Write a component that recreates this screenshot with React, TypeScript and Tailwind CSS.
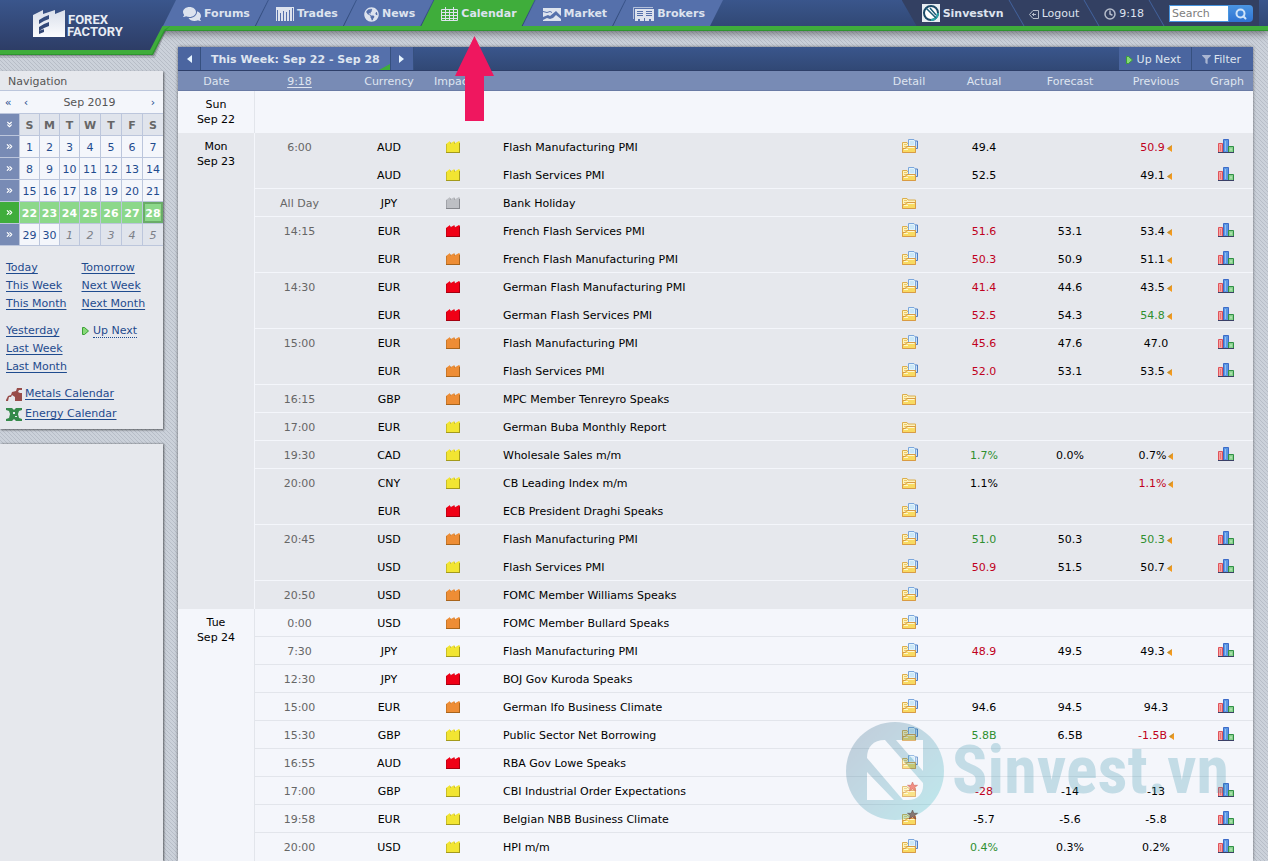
import React from 'react';
import { ChevronsDown, ChevronsRight, Clock, Search } from 'lucide-react';
import { FaComments, FaFilter, FaGlobeAmericas } from 'react-icons/fa';
import clsx from 'clsx';

type Impact = 'low' | 'medium' | 'high' | 'none';
type Detail = 'folder' | 'docs' | 'star' | 'darkstar';
type Tone = 'up' | 'down';

interface CalendarEvent {
  time?: string;
  currency: string;
  impact: Impact;
  title: string;
  detail: Detail;
  actual?: string;
  actualTone?: Tone;
  forecast?: string;
  previous?: string;
  previousTone?: Tone;
  revised?: boolean;
  graph?: boolean;
}

interface CalendarDay {
  weekday: string;
  date: string;
  shaded: boolean;
  events: CalendarEvent[];
}

const DAYS: CalendarDay[] = [
  { weekday: 'Sun', date: 'Sep 22', shaded: false, events: [] },
  {
    weekday: 'Mon',
    date: 'Sep 23',
    shaded: true,
    events: [
      { time: '6:00', currency: 'AUD', impact: 'low', title: 'Flash Manufacturing PMI', detail: 'docs', actual: '49.4', previous: '50.9', previousTone: 'down', revised: true, graph: true },
      { currency: 'AUD', impact: 'low', title: 'Flash Services PMI', detail: 'docs', actual: '52.5', previous: '49.1', revised: true, graph: true },
      { time: 'All Day', currency: 'JPY', impact: 'none', title: 'Bank Holiday', detail: 'folder' },
      { time: '14:15', currency: 'EUR', impact: 'high', title: 'French Flash Services PMI', detail: 'docs', actual: '51.6', actualTone: 'down', forecast: '53.1', previous: '53.4', revised: true, graph: true },
      { currency: 'EUR', impact: 'medium', title: 'French Flash Manufacturing PMI', detail: 'docs', actual: '50.3', actualTone: 'down', forecast: '50.9', previous: '51.1', revised: true, graph: true },
      { time: '14:30', currency: 'EUR', impact: 'high', title: 'German Flash Manufacturing PMI', detail: 'docs', actual: '41.4', actualTone: 'down', forecast: '44.6', previous: '43.5', revised: true, graph: true },
      { currency: 'EUR', impact: 'high', title: 'German Flash Services PMI', detail: 'docs', actual: '52.5', actualTone: 'down', forecast: '54.3', previous: '54.8', previousTone: 'up', revised: true, graph: true },
      { time: '15:00', currency: 'EUR', impact: 'medium', title: 'Flash Manufacturing PMI', detail: 'docs', actual: '45.6', actualTone: 'down', forecast: '47.6', previous: '47.0', graph: true },
      { currency: 'EUR', impact: 'medium', title: 'Flash Services PMI', detail: 'docs', actual: '52.0', actualTone: 'down', forecast: '53.1', previous: '53.5', revised: true, graph: true },
      { time: '16:15', currency: 'GBP', impact: 'medium', title: 'MPC Member Tenreyro Speaks', detail: 'folder' },
      { time: '17:00', currency: 'EUR', impact: 'low', title: 'German Buba Monthly Report', detail: 'folder' },
      { time: '19:30', currency: 'CAD', impact: 'low', title: 'Wholesale Sales m/m', detail: 'docs', actual: '1.7%', actualTone: 'up', forecast: '0.0%', previous: '0.7%', revised: true, graph: true },
      { time: '20:00', currency: 'CNY', impact: 'low', title: 'CB Leading Index m/m', detail: 'folder', actual: '1.1%', previous: '1.1%', previousTone: 'down', revised: true },
      { currency: 'EUR', impact: 'high', title: 'ECB President Draghi Speaks', detail: 'docs' },
      { time: '20:45', currency: 'USD', impact: 'medium', title: 'Flash Manufacturing PMI', detail: 'docs', actual: '51.0', actualTone: 'up', forecast: '50.3', previous: '50.3', previousTone: 'up', revised: true, graph: true },
      { currency: 'USD', impact: 'low', title: 'Flash Services PMI', detail: 'docs', actual: '50.9', actualTone: 'down', forecast: '51.5', previous: '50.7', revised: true, graph: true },
      { time: '20:50', currency: 'USD', impact: 'medium', title: 'FOMC Member Williams Speaks', detail: 'docs' }
    ]
  },
  {
    weekday: 'Tue',
    date: 'Sep 24',
    shaded: false,
    events: [
      { time: '0:00', currency: 'USD', impact: 'medium', title: 'FOMC Member Bullard Speaks', detail: 'docs' },
      { time: '7:30', currency: 'JPY', impact: 'low', title: 'Flash Manufacturing PMI', detail: 'docs', actual: '48.9', actualTone: 'down', forecast: '49.5', previous: '49.3', revised: true, graph: true },
      { time: '12:30', currency: 'JPY', impact: 'high', title: 'BOJ Gov Kuroda Speaks', detail: 'docs' },
      { time: '15:00', currency: 'EUR', impact: 'medium', title: 'German Ifo Business Climate', detail: 'docs', actual: '94.6', forecast: '94.5', previous: '94.3', graph: true },
      { time: '15:30', currency: 'GBP', impact: 'low', title: 'Public Sector Net Borrowing', detail: 'docs', actual: '5.8B', actualTone: 'up', forecast: '6.5B', previous: '-1.5B', previousTone: 'down', revised: true, graph: true },
      { time: '16:55', currency: 'AUD', impact: 'high', title: 'RBA Gov Lowe Speaks', detail: 'docs' },
      { time: '17:00', currency: 'GBP', impact: 'low', title: 'CBI Industrial Order Expectations', detail: 'star', actual: '-28', actualTone: 'down', forecast: '-14', previous: '-13', graph: true },
      { time: '19:58', currency: 'EUR', impact: 'low', title: 'Belgian NBB Business Climate', detail: 'darkstar', actual: '-5.7', forecast: '-5.6', previous: '-5.8', graph: true },
      { time: '20:00', currency: 'USD', impact: 'low', title: 'HPI m/m', detail: 'docs', actual: '0.4%', actualTone: 'up', forecast: '0.3%', previous: '0.2%', graph: true }
    ]
  }
];

const WEEKS = [
  [1, 2, 3, 4, 5, 6, 7],
  [8, 9, 10, 11, 12, 13, 14],
  [15, 16, 17, 18, 19, 20, 21],
  [22, 23, 24, 25, 26, 27, 28],
  [29, 30, 1, 2, 3, 4, 5]
];

const IMPACT_COLORS: Record<Impact, { fill: string; edge: string; label: string }> = {
  low: { fill: '#f2e532', edge: '#a39a1c', label: 'Low impact' },
  medium: { fill: '#ee8d35', edge: '#a8641c', label: 'Medium impact' },
  high: { fill: '#f00016', edge: '#a30010', label: 'High impact' },
  none: { fill: '#bdbfc4', edge: '#85878d', label: 'Non-economic' }
};

function ImpactIcon({ impact }: { impact: Impact }) {
  const { fill, edge, label } = IMPACT_COLORS[impact];
  return (
    <svg width="14" height="12" viewBox="0 0 14 12" role="img" aria-label={label} className="mx-auto block">
      <path d="M0 12V3l4-3v2.500L8.500 0v2.500L13 0l1 1v11z" fill={fill} />
      <path d="M0 11h13V2h1v10H0z" fill={edge} />
      <path d="M0 3h1v8H0zM4 1h1v2H4zM8 1h1v2H8z" fill={edge} opacity=".5" />
    </svg>
  );
}

function DetailIcon({ type }: { type: Detail }) {
  return (
    <svg width="16" height="15" viewBox="0 0 16 15" aria-hidden="true" className="ml-[23px] block">
      <path d="M.5 14.500V4.500h4.500l1 1.500h7.500v8.500z" fill="#fdf3bd" stroke="#dcae4c" />
      <path d="M2 6.500h3M2 8.500h2" stroke="#ecc968" />
      {type === 'docs' && (
        <>
          <path d="M9 3h6.500v7.500H9z" fill="#c9dff5" stroke="#4f7fc4" />
          <path d="M6.500 1.500h5.500l1.500 1.500v6.500h-7z" fill="#e2f3fb" stroke="#7ba6dc" />
          <path d="M8 4h4M8 6h4" stroke="#b5dcf2" />
        </>
      )}
      <path d="M.5 14.500v-4h3l1-2h9v6z" fill="#f8da62" stroke="#d99b45" />
      <path d="M5.500 9.500h7M2 11.500h4" stroke="#fff7d0" />
      {(type === 'star' || type === 'darkstar') && (
        <path
          d="M10.500 0l1.300 3.300h3.700l-2.900 2.100 1.200 3.600-3.300-2.100L7.200 9l1.200-3.600-2.900-2.100h3.700z"
          fill={type === 'star' ? '#ee6a5c' : '#a9655a'}
          stroke={type === 'star' ? '#c9483c' : '#7c4238'}
          strokeWidth=".7"
        />
      )}
    </svg>
  );
}

function GraphIcon() {
  return (
    <svg width="16" height="14" viewBox="0 0 16 14" aria-hidden="true" className="block">
      <path d="M.5 4.500h4v9h-4z" fill="#f5a3a1" stroke="#e0525a" />
      <path d="M2.500 6v6" stroke="#ee7377" />
      <path d="M5.500.5h5v13h-5z" fill="#5b97e4" stroke="#3c6bc8" />
      <path d="M7.500 2v10" stroke="#92bff2" />
      <path d="M10.500 7.500h5v6h-5z" fill="#86d08c" stroke="#2f8f45" />
      <path d="M12.500 9.500h1v2h-1z" fill="#d8f3d4" />
      <path d="M0 13.500h16" stroke="#3a3f66" />
    </svg>
  );
}

function PlayIcon() {
  return (
    <svg width="7" height="8" viewBox="0 0 7 8" aria-hidden="true" className="shrink-0">
      <path d="M.5.500h2L6.500 4l-4 3.500h-2z" fill="#86d977" stroke="#3a9f35" />
    </svg>
  );
}

function Logo() {
  return (
    <a href="#" aria-label="Forex Factory" className="relative block h-[26px] w-[176px] shrink-0">
      <svg width="180" height="62" viewBox="0 0 180 62" className="absolute left-0 top-0">
        <defs>
          <linearGradient id="logoBg" x1="0" y1="0" x2="0" y2="1">
            <stop offset="0" stopColor="#3a568c" />
            <stop offset="1" stopColor="#2d3d66" />
          </linearGradient>
          <linearGradient id="logoMark" x1="0" y1="0" x2="0" y2="1">
            <stop offset="0" stopColor="#d9dfea" />
            <stop offset="1" stopColor="#fbfcfe" />
          </linearGradient>
        </defs>
        <path d="M0 31H166L155 58H0z" fill="#000" opacity=".12" />
        <path d="M0 31H166L154 56H0z" fill="#000" opacity=".2" />
        <path d="M0 26H170L165 31 153 55H0z" fill="#2f9430" />
        <path d="M0 26H170L164 30 152 54H0z" fill="#3fad3b" />
        <path d="M0 0H176L150 50H0z" fill="url(#logoBg)" />
        <path
          d="M33 15l10-5v4l12-4v4l10-4v27H33zM39 20v4l5-3v-4zM44 17v4l5-2v-4zM39 27v4l5-2v-5zM44 24v4l5-2v-4zM39 31v3l5-2v-4z"
          fill="url(#logoMark)"
          fillRule="evenodd"
        />
        <g fill="#e8ecf4" fontFamily="Roboto, sans-serif" fontWeight="700" fontSize="13">
          <text x="68" y="24">FOREX</text>
          <text x="67" y="36">FACTORY</text>
        </g>
      </svg>
    </a>
  );
}

function TradesIcon() {
  return (
    <svg width="18" height="14" viewBox="0 0 18 14" aria-hidden="true">
      <path d="M0 0h18v14h-1V1h-1v13h-2V3h-1v11h-2V5h-1v9H8V4H7v10H5V6H4v8H2V3H1v11H0z" fill="currentColor" />
    </svg>
  );
}

function CalendarIcon() {
  return (
    <svg width="17" height="14" viewBox="0 0 17 14" aria-hidden="true">
      <path d="M.5 2.500h16v11H.5zM0 5.500h17M0 8.500h17M0 11.500h17M4.500 0v14M8.500 3v11M12.500 0v14" fill="none" stroke="currentColor" />
    </svg>
  );
}

function MarketIcon() {
  return (
    <svg width="18" height="13" viewBox="0 0 18 13" aria-hidden="true">
      <path d="M0 0h18v13H0z" fill="currentColor" />
      <path d="M0 9l5-2 2 1 6-5 5 5v3l-5-4-3 3-3 1-3-1-4 2z" fill="#5570ab" />
      <path d="M0 3.500l4 1 3-1 2 1" fill="none" stroke="#5570ab" />
    </svg>
  );
}

function BrokersIcon() {
  return (
    <svg width="21" height="14" viewBox="0 0 21 14" aria-hidden="true">
      <path d="M.5 12V.5H20" fill="none" stroke="currentColor" opacity=".7" />
      <path d="M2 2h19v12h-3v-2h-2v2h-4v-3h-1v3H7v-2H5v2H2z" fill="currentColor" />
      <path d="M4 4.500h6M4 6.500h6M4 8.500h6M13 4.500h6M13 6.500h6M13 8.500h6" stroke="#5570ab" />
    </svg>
  );
}

function HintArrow() {
  return (
    <svg width="39" height="85" viewBox="0 0 39 85" aria-hidden="true" className="pointer-events-none absolute left-[34px] top-9">
      <path d="M19.500 0L39 40H29v45H10V40H0z" fill="#ef175f" />
    </svg>
  );
}

const TABS = [
  { label: 'Forums', icon: <FaComments size={18} /> },
  { label: 'Trades', icon: <TradesIcon /> },
  { label: 'News', icon: <FaGlobeAmericas size={15} /> },
  { label: 'Calendar', icon: <CalendarIcon />, active: true },
  { label: 'Market', icon: <MarketIcon /> },
  { label: 'Brokers', icon: <BrokersIcon /> }
];

function Slash() {
  return <span className="h-full w-px skew-x-[30deg] bg-[#43639f]" />;
}

function Header() {
  return (
    <header className="relative z-20 border-b border-[#2f9430] shadow-[0_2px_8px_rgba(0,0,0,0.5)]">
      <div className="flex h-[30px] items-start justify-between border-b-4 border-[#3fad3b] bg-linear-to-b from-[#3a568c] to-[#314875]">
        <div className="flex">
          <Logo />
          <ul className="-ml-px flex font-bold text-[#dde3ee]">
            {TABS.map((tab) => (
              <li key={tab.label} className="relative -ml-3">
                <a
                  href="#"
                  className={clsx(
                    'flex h-[26px] items-center gap-[3px] pl-5 pr-[18px] pt-0.5 [clip-path:polygon(13px_0,100%_0,calc(100%-13px)_100%,0_100%)]',
                    tab.active ? 'bg-[#3fad3b]' : 'bg-[#5570ab]'
                  )}
                >
                  {tab.icon}
                  <span>{tab.label}</span>
                </a>
                {tab.active && <HintArrow />}
              </li>
            ))}
          </ul>
        </div>

        <div className="mr-[9px] flex h-[26px] items-center bg-[#334062] pl-5 pr-1.5 text-[#dde3ee] [clip-path:polygon(0_0,100%_0,100%_100%,15px_100%)]">
          <a href="#" className="flex items-center gap-[3px] pr-3 font-bold">
            <svg width="18" height="18" viewBox="0 0 18 18" aria-hidden="true">
              <path d="M0 0h18v18H0z" fill="#e8edf2" />
              <circle cx="9" cy="9" r="7" fill="#fff" stroke="#1c4a68" strokeWidth="2" />
              <path d="M9 16a7 7 0 0 0 7-7" fill="none" stroke="#2aa5a8" strokeWidth="2" />
              <path d="M4 4l10 10M8 4l6 7" stroke="#1c5d78" strokeWidth="1.500" fill="none" />
            </svg>
            <span className="pt-0.5">Sinvestvn</span>
          </a>
          <Slash />
          <a href="#" className="flex items-center gap-[3px] px-3 pt-0.5">
            <svg width="10" height="9" viewBox="0 0 10 9" aria-hidden="true" fill="none" stroke="#b5bccb">
              <path d="M4 .5h5.500v8H4l-3.500-4zM3 4.500h4M4.500 3v3" />
            </svg>
            Logout
          </a>
          <Slash />
          <a href="#" className="flex items-center gap-[3px] px-3 pt-0.5">
            <Clock size={12} strokeWidth={3} className="text-[#b5bccb]" />
            9:18
          </a>
          <Slash />
          <form className="ml-3 mt-[5px] flex h-[17px] w-[84px] self-start">
            <input
              aria-label="Search"
              placeholder="Search"
              className="min-w-0 flex-1 border border-[#4795e0] bg-white px-0.5 text-[11px] text-[#333] placeholder:text-[#7d7d7d]"
            />
            <button type="button" aria-label="Go" className="flex w-6 items-center justify-center rounded-r-sm bg-linear-to-b from-[#4b95e2] to-[#2f73d2] text-[#cfe4fa]">
              <Search size={12} strokeWidth={4} />
            </button>
          </form>
        </div>
      </div>
    </header>
  );
}

function MiniCalendar() {
  return (
    <table className="w-full table-fixed border-separate border-spacing-0 text-center">
      <colgroup>
        <col className="w-5" />
        <col className="w-5" />
        <col className="w-5" />
        <col className="w-5" />
        <col className="w-[21px]" />
        <col className="w-[21px]" />
        <col className="w-[21px]" />
        <col />
      </colgroup>
      <thead>
        <tr className="h-[22px] text-[#666]">
          <th className="border-b border-r border-[#bcc6dc] bg-[#788bb5] text-white">
            <ChevronsDown size={9} strokeWidth={3} className="mx-auto" />
          </th>
          {['S', 'M', 'T', 'W', 'T', 'F', 'S'].map((day, i) => (
            <th key={i} className="border-b border-r border-[#bcc6dc] bg-[#e0e4ec] pt-0.5 font-bold last:border-r-0">
              {day}
            </th>
          ))}
        </tr>
      </thead>
      <tbody>
        {WEEKS.map((week, w) => {
          const current = w === 3;
          return (
            <tr key={w} className="h-[22px]">
              <td className={clsx('border-b border-r border-[#bcc6dc] text-white', current ? 'bg-[#3fad3b]' : 'bg-[#788bb5]')}>
                <ChevronsRight size={9} strokeWidth={3} className="mx-auto" />
              </td>
              {week.map((day, d) => {
                const nextMonth = w === 4 && d > 1;
                const today = current && d === 6;
                return (
                  <td
                    key={d}
                    className={clsx(
                      'border-b border-r border-[#bcc6dc] pt-0.5 last:border-r-0',
                      current && 'bg-[#8cd88a] font-bold text-white',
                      today && 'shadow-[inset_0_0_0_2px_#6aac68]',
                      nextMonth && 'bg-[#e0e4ec] italic text-[#7c8088]',
                      !current && !nextMonth && 'bg-[#f4f6fb] text-[#1f4b8e]'
                    )}
                  >
                    <a href="#">{day}</a>
                  </td>
                );
              })}
            </tr>
          );
        })}
      </tbody>
    </table>
  );
}

function QuickLinks({ links }: { links: string[] }) {
  return (
    <ul className="w-19">
      {links.map((link) => (
        <li key={link} className="leading-[18px]">
          <a href="#" className="underline underline-offset-2">{link}</a>
        </li>
      ))}
    </ul>
  );
}

function Sidebar() {
  return (
    <aside className="flex w-[163px] shrink-0 flex-col gap-[15px] pt-10">
      <section className="bg-[#e6e8ed] pb-[5px] shadow-[1px_1px_2px_rgba(0,0,0,0.55)]">
        <h2 className="flex h-5 items-center border-b border-[#bcc6dc] px-2 pt-0.5 text-[#555]">Navigation</h2>
        <div className="flex h-[23px] items-center border-b border-[#bcc6dc] bg-[#f4f6fb] pt-0.5 text-[#1f4b8e]">
          <a href="#" className="w-4 text-center">«</a>
          <a href="#" className="w-5 text-center">‹</a>
          <span className="flex-1 text-center text-[#555]">Sep 2019</span>
          <a href="#" className="w-5 text-center">›</a>
        </div>
        <MiniCalendar />
        <div className="px-1.5 pt-[13px] text-[#1f4b8e]">
          <div className="flex">
            <QuickLinks links={['Today', 'This Week', 'This Month']} />
            <QuickLinks links={['Tomorrow', 'Next Week', 'Next Month']} />
          </div>
          <div className="mt-[9px] flex items-start">
            <QuickLinks links={['Yesterday', 'Last Week', 'Last Month']} />
            <a href="#" className="flex h-[18px] items-center gap-1">
              <PlayIcon />
              <span className="border-b border-dotted border-[#1f4b8e] leading-[13px]">Up Next</span>
            </a>
          </div>
          <ul className="mt-2">
            <li className="flex h-5 items-center gap-[3px]">
              <svg width="16" height="13" viewBox="0 0 16 13" aria-hidden="true">
                <path d="M0 12l2-4 3-1 1-3 4-1 1-3h5v2h-3l-1 2 2 1h2v8H9V9L6 7 5 9 3 9l-1 4H0z" fill="#984c49" />
              </svg>
              <a href="#" className="underline underline-offset-2">Metals Calendar</a>
            </li>
            <li className="flex h-5 items-center gap-[3px]">
              <svg width="16" height="13" viewBox="0 0 16 13" aria-hidden="true">
                <path d="M0 0h6l2 2 2-2h6v2l-3 1-1 3 1 4 3 1v2h-6l-2-2-2 2H0v-2l3-1 1-4-1-3-3-1z" fill="#358a4b" />
                <path d="M7 4h2v2H7zM9 8h2v1H9z" fill="#e6e8ed" />
              </svg>
              <a href="#" className="underline underline-offset-2">Energy Calendar</a>
            </li>
          </ul>
        </div>
      </section>
      <section className="flex-1 bg-[#e6e8ed] shadow-[1px_0_2px_rgba(0,0,0,0.55)]" />
    </aside>
  );
}

function Toolbar() {
  return (
    <div className="flex h-6 items-stretch border-b border-[#2e3f69] bg-linear-to-b from-[#3a568c] to-[#314875] text-[#dfe5f0]">
      <button aria-label="Previous week" className="flex w-[23px] items-center justify-center border-r border-[#36507f] bg-[#4b65a0]">
        <svg width="5" height="8" viewBox="0 0 5 8"><path d="M5 0v8L0 4z" fill="#e6f4ff" /></svg>
      </button>
      <button className="relative bg-[#5570ab] px-2.5 pt-0.5 text-left font-bold">
        This Week: Sep 22 - Sep 28
        <svg width="11" height="6" viewBox="0 0 11 6" className="absolute bottom-0 right-0"><path d="M0 6l11-6v6z" fill="#3fad3b" /></svg>
      </button>
      <button aria-label="Next week" className="flex w-6 items-center justify-center border-x border-[#36507f] bg-[#4b65a0]">
        <svg width="5" height="8" viewBox="0 0 5 8"><path d="M0 0v8l5-4z" fill="#e6f4ff" /></svg>
      </button>
      <button className="ml-auto flex items-center gap-1 bg-[#4a659f] pl-[7px] pr-2.5 pt-0.5">
        <PlayIcon />
        Up Next
      </button>
      <button className="flex items-center gap-[3px] border-l border-[#36507f] bg-[#4a659f] pl-2.5 pr-3 pt-0.5">
        <FaFilter size={9} className="text-[#aab6d2]" />
        Filter
      </button>
    </div>
  );
}

function toneClass(tone?: Tone) {
  if (tone === 'up') return 'text-[#2f8f2f]';
  if (tone === 'down') return 'text-[#c00020]';
  return 'text-black';
}

function EventCells({ event }: { event: CalendarEvent }) {
  return (
    <>
      <td className="pt-2 text-[#666]">{event.time}</td>
      <td className="pt-2">{event.currency}</td>
      <td className="pt-2"><ImpactIcon impact={event.impact} /></td>
      <td className="pl-[31px] pt-2 text-left">{event.title}</td>
      <td className="pt-[5px]"><DetailIcon type={event.detail} /></td>
      <td className={clsx('pt-2', toneClass(event.actualTone))}>{event.actual}</td>
      <td className="pt-2">{event.forecast}</td>
      <td className={clsx('pt-2', toneClass(event.previousTone))}>
        <span className="flex items-center justify-center gap-0.5">
          {event.previous}
          {event.revised && (
            <svg width="5" height="7" viewBox="0 0 5 7" role="img" aria-label="Revised">
              <path d="M5 0v7L0 3.500z" fill="#f39a1f" />
              <path d="M5 0L0 3.500 2 5z" fill="#a98d3c" opacity=".6" />
            </svg>
          )}
        </span>
      </td>
      <td className="pl-[17px] pt-1.5">
        {event.graph && <a href="#" aria-label="Graph" className="block w-4"><GraphIcon /></a>}
      </td>
    </>
  );
}

function DayRows({ day }: { day: CalendarDay }) {
  const rowBg = day.shaded ? 'bg-[#e6e8ed]' : 'bg-[#f4f6fb]';
  const line = day.shaded ? 'border-[#f4f6fb]' : 'border-[#e2e5eb]';
  const dateCell = (
    <td
      rowSpan={Math.max(day.events.length, 1)}
      className={clsx('border-r pt-1.5 align-top leading-[15px]', line)}
    >
      {day.weekday}
      <br />
      {day.date}
    </td>
  );

  if (day.events.length === 0) {
    return (
      <tr className={clsx('h-[42px]', rowBg)}>
        {dateCell}
        <td colSpan={9} />
      </tr>
    );
  }

  return (
    <>
      {day.events.map((event, i) => {
        // a rule is drawn only where a new time slot starts
        const ruled = Boolean(day.events[i + 1]?.time);
        return (
          <tr
            key={i}
            className={clsx('h-7 [&>td]:align-top', rowBg, line, ruled && '[&>td:not([rowspan])]:border-b [&>td]:border-inherit')}
          >
            {i === 0 && dateCell}
            <EventCells event={event} />
          </tr>
        );
      })}
    </>
  );
}

function Watermark() {
  return (
    <div className="pointer-events-none absolute bottom-[41px] right-6 flex items-center gap-2 opacity-25" aria-hidden="true">
      <svg width="98" height="98" viewBox="0 0 98 98">
        <defs>
          <linearGradient id="mark" x1="0" y1="0" x2="1" y2="1">
            <stop offset="0" stopColor="#2a5478" />
            <stop offset=".5" stopColor="#2f8aa5" />
            <stop offset="1" stopColor="#22c5c5" />
          </linearGradient>
        </defs>
        <circle cx="49" cy="49" r="49" fill="url(#mark)" />
        <path d="M50 18h27v31zM21 50v28h27z" fill="#fff" />
        <path d="M21 36c0-11 6-18 18-18l38 43c1 10-5 17-15 17h-5z" fill="#fff" />
      </svg>
      <span className="font-['Roboto_Condensed','Open_Sans_Condensed','Liberation_Sans_Narrow',Roboto,sans-serif] text-[66px] font-bold leading-none text-[#3591ab]">
        Sinvest.vn
      </span>
    </div>
  );
}

function EventTable() {
  return (
    <table className="w-full table-fixed border-separate border-spacing-0 text-center text-black">
      <colgroup>
        <col className="w-[77px]" />
        <col className="w-[89px]" />
        <col className="w-[90px]" />
        <col className="w-[38px]" />
        <col />
        <col className="w-[60px]" />
        <col className="w-[90px]" />
        <col className="w-[82px]" />
        <col className="w-[90px]" />
        <col className="w-[52px]" />
      </colgroup>
      <thead>
        <tr className="h-5 bg-[#788bb5] text-[#dfe5f0] [&>th]:border-b [&>th]:border-[#6a7ba5] [&>th]:pt-0.5 [&>th]:font-normal">
          <th>Date</th>
          <th><a href="#" className="underline underline-offset-2">9:18</a></th>
          <th>Currency</th>
          <th>Impact</th>
          <th aria-label="Event" />
          <th>Detail</th>
          <th>Actual</th>
          <th>Forecast</th>
          <th>Previous</th>
          <th>Graph</th>
        </tr>
      </thead>
      <tbody>
        {DAYS.map((day) => (
          <DayRows key={day.date} day={day} />
        ))}
      </tbody>
    </table>
  );
}

export default function App() {
  return (
    <div className="flex min-h-screen flex-col bg-[#cad0d9] bg-[linear-gradient(45deg,#cbd1da_0_44%,#b7bdc7_44%_56%,#cbd1da_56%)] bg-size-[4px_4px] font-['DejaVu_Sans',sans-serif] text-[11px] leading-[14px]">
      <Header />
      <div className="flex flex-1 gap-[15px] pr-[15px]">
        <Sidebar />
        <main className="min-w-0 flex-1 pt-4">
          <div className="relative shadow-[0_0_3px_rgba(0,0,0,0.5)]">
            <Toolbar />
            <EventTable />
            <Watermark />
          </div>
        </main>
      </div>
    </div>
  );
}
